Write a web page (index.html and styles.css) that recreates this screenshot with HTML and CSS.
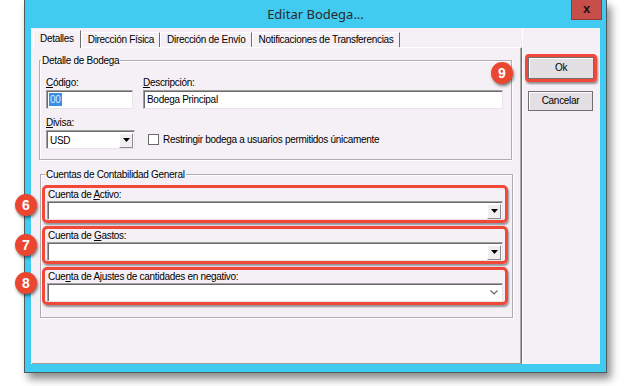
FILE: index.html
```html
<!DOCTYPE html>
<html lang="es">
<head>
<meta charset="utf-8">
<title>Editar Bodega...</title>
<link rel="stylesheet" href="styles.css">
</head>
<body>
<div class="stage">
  <div class="window">
    <div class="titlebar">
      <span class="title">Editar Bodega...</span>
      <div class="close">x</div>
    </div>
    <div class="client">
      <div class="tabarea">
        <div class="tabs">
          <div class="tab active">Detalles</div>
          <div class="tab">Dirección Física</div>
          <div class="tab">Dirección de Envío</div>
          <div class="tab">Notificaciones de Transferencias</div>
        </div>
        <div class="panel">
          <fieldset class="group g1">
            <legend>Detalle de Bodega</legend>
            <div class="row first">
              <div class="col code">
                <div class="lbl"><u>C</u>ódigo:</div>
                <div class="edit"><span class="sel">00</span></div>
              </div>
              <div class="col desc">
                <div class="lbl"><u>D</u>escripción:</div>
                <div class="edit">Bodega Principal</div>
              </div>
            </div>
            <div class="row second">
              <div class="col cur">
                <div class="lbl"><u>D</u>ivisa:</div>
                <div class="combo small"><span class="val">USD</span><span class="ddbtn"><svg width="7" height="4" viewBox="0 0 7 4"><path d="M0 0H7L3.5 4Z" fill="#000"/></svg></span></div>
              </div>
              <div class="check"><span class="box"></span><span>Restringir bodega a usuarios permitidos únicamente</span></div>
            </div>
          </fieldset>
          <fieldset class="group g2">
            <legend>Cuentas de Contabilidad General</legend>
            <div class="acct">
              <div class="lbl">Cuenta de <u>A</u>ctivo:</div>
              <div class="combo"><span class="val"></span><span class="ddbtn"><svg width="7" height="4" viewBox="0 0 7 4"><path d="M0 0H7L3.5 4Z" fill="#000"/></svg></span></div>
            </div>
            <div class="acct">
              <div class="lbl">Cuenta de <u>G</u>astos:</div>
              <div class="combo"><span class="val"></span><span class="ddbtn"><svg width="7" height="4" viewBox="0 0 7 4"><path d="M0 0H7L3.5 4Z" fill="#000"/></svg></span></div>
            </div>
            <div class="acct">
              <div class="lbl">Cue<u>n</u>ta de Ajustes de cantidades en negativo:</div>
              <div class="combo"><span class="val"></span><span class="chev"><svg width="8" height="5" viewBox="0 0 8 5"><path d="M0.5 0.5L4 4L7.5 0.5" fill="none" stroke="#666" stroke-width="1.2"/></svg></span></div>
            </div>
          </fieldset>
        </div>
      </div>
      <div class="buttons">
        <div class="okwrap"><div class="btn ok">Ok</div></div>
        <div class="btn cancel">Cancelar</div>
      </div>
    </div>
  </div>
  <div class="badge b6">6</div>
  <div class="badge b7">7</div>
  <div class="badge b8">8</div>
  <div class="badge b9">9</div>
</div>
</body>
</html>
```
FILE: styles.css
```css
* { box-sizing: border-box; }
body {
  margin: 0;
  background: #fff;
  font-family: "Liberation Sans", Arial, sans-serif;
  font-size: 10px;
  letter-spacing: -0.3px;
  color: #000;
}
.stage {
  position: relative;
  width: 626px;
  height: 386px;
  overflow: hidden;
}
.window {
  margin-left: 24px;
  width: 583px;
  height: 373px;
  border: 1px solid #4d5a5f;
  border-top: 0;
  background: #41cbf0;
  box-shadow: 4px 6px 8px rgba(0, 0, 0, 0.45);
  display: flex;
  flex-direction: column;
}
.titlebar {
  height: 28px;
  display: grid;
  grid-template-columns: 1fr auto 1fr;
  align-items: start;
}
.title {
  grid-column: 2;
  font-family: "Noto Sans", sans-serif;
  font-size: 13px;
  letter-spacing: 0;
  line-height: 28px;
  color: #2a2a2a;
}
.close {
  grid-column: 3;
  justify-self: end;
  margin-right: 4px;
  width: 31px;
  height: 20px;
  background: #c84f49;
  border: 1px solid #9b3a35;
  border-top: 0;
  color: #141414;
  font-family: "Liberation Sans", Arial, sans-serif;
  font-weight: bold;
  font-size: 13px;
  letter-spacing: 0;
  line-height: 18px;
  text-align: center;
}
.client {
  margin: 0 6px;
  height: 336px;
  display: flex;
  background: #f5f0f5;
  border-left: 1px solid #fff;
}
.tabarea {
  width: 490px;
  display: flex;
  flex-direction: column;
}
.tabs {
  height: 19px;
  display: flex;
  align-items: flex-end;
  padding-left: 1px;
}
.tab {
  height: 15px;
  line-height: 14px;
  padding: 0 5px 0 6px;
  border-left: 1px solid #fff;
  border-right: 1px solid #6e6e6e;
  border-top: 1px solid #fff;
  white-space: nowrap;
}
.tab.active {
  height: 18px;
  margin-bottom: -1px;
  line-height: 16px;
  padding: 0 6px 0 6px;
  background: #f5f0f5;
  position: relative;
  z-index: 1;
}
.panel {
  flex: 1;
  border-top: 1px solid #fff;
  border-right: 1px solid #6e6e6e;
  border-bottom: 1px solid #a0a0a0;
  box-shadow: inset -1px 0 0 #a8a8a8;
}
.group {
  margin: 0;
  padding: 0 0 0 6px;
  border: 1px solid #b2acb2;
  box-shadow: inset 1px 1px 0 #fff, 1px 1px 0 #fff;
  width: 473px;
  min-width: 0;
}
.group legend {
  padding: 0 1px;
  margin-left: -5px;
  line-height: 13px;
}
.g1 {
  margin: 6px 0 0 7px;
  height: 106px;
}
.g2 {
  margin: 8px 0 0 8px;
  height: 150px;
  padding-left: 1px;
}
.g2 legend { margin-left: 3px; }
.row { display: flex; }
.row.first { margin-top: 9px; gap: 10px; }
.row.second { margin-top: 7px; align-items: flex-end; gap: 13px; }
.lbl {
  line-height: 13px;
  white-space: nowrap;
}
.code { width: 87px; }
.desc { width: 360px; }
.cur { width: 89px; }
.edit, .combo {
  height: 19px;
  margin-top: 1px;
  background: #fff;
  border: 1px solid;
  border-color: #a0a0a0 #e6e6e6 #e6e6e6 #a0a0a0;
  box-shadow: inset 1px 1px 0 #6a6a6a;
  padding: 0 0 0 3px;
  line-height: 17px;
  white-space: nowrap;
  display: flex;
  align-items: center;
}
.sel {
  background: #3a8ee6;
  color: #dbe9ff;
  line-height: 13px;
  padding: 0 1px;
  margin-left: -1px;
}
.combo .val { flex: 1; padding-top: 1px; }
.ddbtn {
  width: 14px;
  height: 15px;
  margin-right: 1px;
  margin-top: 1px;
  background: #f0eef0;
  border: 1px solid;
  border-color: #fff #8a8a8a #8a8a8a #fff;
  display: flex;
  align-items: center;
  justify-content: center;
}
.chev {
  width: 14px;
  display: flex;
  justify-content: center;
  margin-right: 1px;
}
.check {
  height: 19px;
  display: flex;
  align-items: center;
  gap: 4px;
  white-space: nowrap;
}
.box {
  width: 11px;
  height: 11px;
  background: #fff;
  border: 1px solid #6a6a6a;
}
.acct {
  width: 466px;
  border: 3px solid #f2483a;
  border-radius: 5px;
  padding: 0 2px;
  box-shadow: 1px 2px 2px rgba(0, 0, 0, 0.4);
}
.g2 legend + .acct { margin-top: 4px; }
.acct + .acct { margin-top: 3px; }
.acct .lbl { padding-left: 1px; }
.acct .combo { margin-top: 0; }
.buttons {
  flex: 1;
  border-left: 1px solid #fff;
}
.okwrap {
  margin: 26px 0 0 2px;
  width: 72px;
  height: 28px;
  border: 3px solid #f2483a;
  border-radius: 4px;
  box-shadow: 1px 2px 2px rgba(0, 0, 0, 0.4);
}
.btn {
  background: #e2e0e2;
  border: 1px solid #6f6f6f;
  box-shadow: inset 1px 1px 0 #fff;
  text-align: center;
}
.ok {
  width: 66px;
  height: 22px;
  line-height: 20px;
}
.cancel {
  margin: 9px 0 0 5px;
  width: 65px;
  height: 20px;
  line-height: 18px;
}
.badge {
  position: absolute;
  width: 22px;
  height: 22px;
  border-radius: 50%;
  background: #ea4630;
  color: #fff;
  font-family: "Liberation Sans", Arial, sans-serif;
  font-weight: bold;
  font-size: 14px;
  letter-spacing: 0;
  line-height: 22px;
  text-align: center;
  box-shadow: 1px 2px 3px rgba(0, 0, 0, 0.5);
}
.b6 { left: 15px; top: 194px; }
.b7 { left: 15px; top: 234px; }
.b8 { left: 15px; top: 272px; }
.b9 { left: 491px; top: 62px; }
```
